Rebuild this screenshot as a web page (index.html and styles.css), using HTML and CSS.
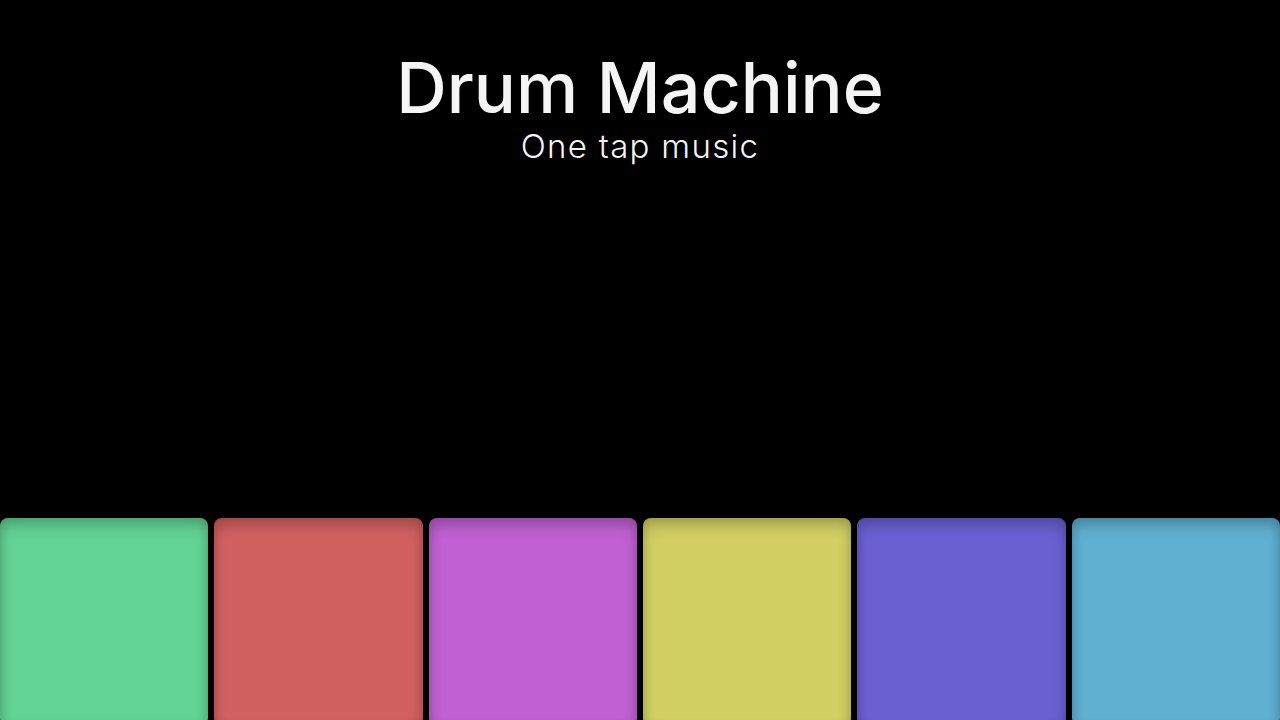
FILE: index.html
```html
<!DOCTYPE html>
<html lang="en">
<head>
<meta charset="utf-8">
<title>Drum Machine</title>
<link rel="stylesheet" href="styles.css">
</head>
<body>
<main class="app">
  <header class="header">
    <h1 class="title">Drum Machine</h1>
    <p class="subtitle">One tap music</p>
  </header>
  <section class="pads">
    <button class="pad pad-green" aria-label="Pad 1"></button>
    <button class="pad pad-red" aria-label="Pad 2"></button>
    <button class="pad pad-purple" aria-label="Pad 3"></button>
    <button class="pad pad-yellow" aria-label="Pad 4"></button>
    <button class="pad pad-indigo" aria-label="Pad 5"></button>
    <button class="pad pad-cyan" aria-label="Pad 6"></button>
  </section>
</main>
</body>
</html>
```
FILE: styles.css
```css
* { box-sizing: border-box; }
html, body {
  margin: 0;
  padding: 0;
  background: #000;
  height: 100%;
  overflow: hidden;
}
body {
  font-family: Inter, "Open Sans", sans-serif;
  color: #f5f5f5;
}
.app {
  display: flex;
  flex-direction: column;
}
.header {
  display: flex;
  flex-direction: column;
  align-items: center;
  padding-top: 50px;
}
.title {
  margin: 0;
  font-size: 70px;
  font-weight: 500;
  line-height: 76px;
  letter-spacing: 0;
}
.subtitle {
  margin: 0;
  font-size: 33px;
  font-weight: 300;
  line-height: 40px;
  letter-spacing: 1.3px;
}
.pads {
  display: grid;
  grid-template-columns: repeat(6, 1fr);
  gap: 6px;
  margin-top: 352px;
}
.pad {
  border: 0;
  padding: 0;
  aspect-ratio: 1 / 1;
  border-radius: 8px;
  box-shadow: inset 0 8px 14px rgba(0,0,0,0.2), inset 0 0 10px rgba(0,0,0,0.12);
}
.pad-green { background: #62d394; }
.pad-red { background: #d26060; }
.pad-purple { background: #c060d2; }
.pad-yellow { background: #d2d062; }
.pad-indigo { background: #6a60d2; }
.pad-cyan { background: #60b0d2; }
```
